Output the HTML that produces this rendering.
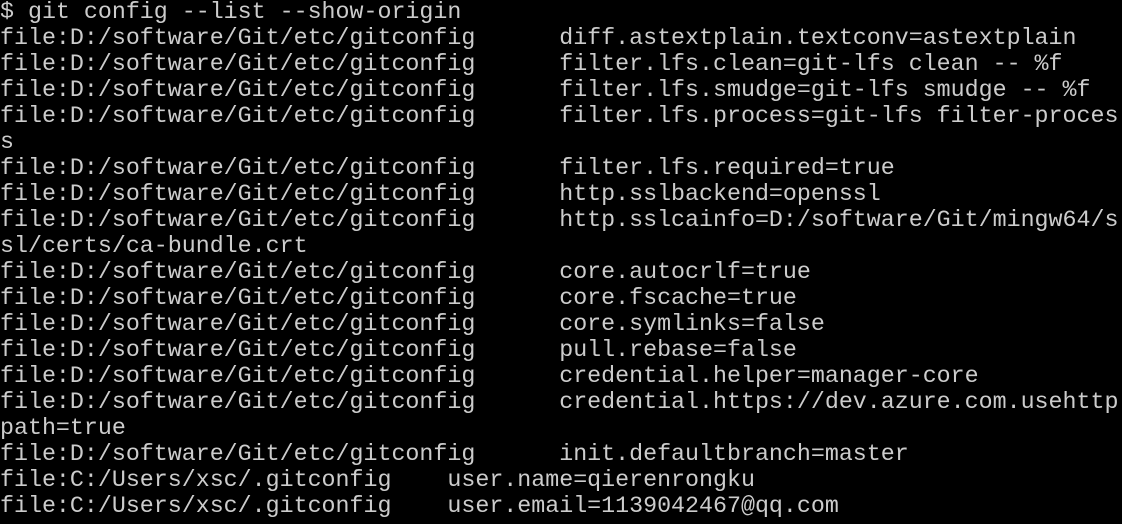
<!DOCTYPE html>
<html><head><style>
html,body{margin:0;padding:0;background:#000;width:1122px;height:524px;overflow:hidden}
pre{margin:0;position:absolute;left:0;top:-1px;font-family:"Liberation Mono",monospace;font-size:23.3px;line-height:26px;color:#cccccc;white-space:pre}
</style></head><body><pre>$ git config --list --show-origin
file:D:/software/Git/etc/gitconfig      diff.astextplain.textconv=astextplain
file:D:/software/Git/etc/gitconfig      filter.lfs.clean=git-lfs clean -- %f
file:D:/software/Git/etc/gitconfig      filter.lfs.smudge=git-lfs smudge -- %f
file:D:/software/Git/etc/gitconfig      filter.lfs.process=git-lfs filter-proces
s
file:D:/software/Git/etc/gitconfig      filter.lfs.required=true
file:D:/software/Git/etc/gitconfig      http.sslbackend=openssl
file:D:/software/Git/etc/gitconfig      http.sslcainfo=D:/software/Git/mingw64/s
sl/certs/ca-bundle.crt
file:D:/software/Git/etc/gitconfig      core.autocrlf=true
file:D:/software/Git/etc/gitconfig      core.fscache=true
file:D:/software/Git/etc/gitconfig      core.symlinks=false
file:D:/software/Git/etc/gitconfig      pull.rebase=false
file:D:/software/Git/etc/gitconfig      credential.helper=manager-core
file:D:/software/Git/etc/gitconfig      credential.https://dev.azure.com.usehttp
path=true
file:D:/software/Git/etc/gitconfig      init.defaultbranch=master
file:C:/Users/xsc/.gitconfig    user.name=qierenrongku
file:C:/Users/xsc/.gitconfig    user.email=1139042467@qq.com</pre></body></html>
